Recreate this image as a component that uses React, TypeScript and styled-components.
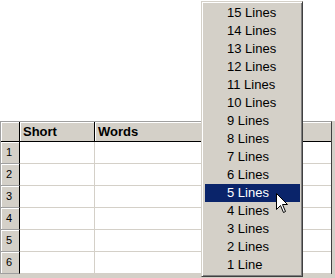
import React from "react";
import styled, { createGlobalStyle } from "styled-components";

const GlobalStyle = createGlobalStyle`
  html, body { margin: 0; padding: 0; background: #ffffff; }
  body { font-family: "Liberation Sans", Arial, sans-serif; }
`;

const Stage = styled.div`
  position: relative;
  width: 335px;
  height: 278px;
  overflow: hidden;
  background: #ffffff;
  padding-top: 121px;
  box-sizing: border-box;
`;

const Panel = styled.div`
  background: #d4d0c8;
  padding: 0 3px 4px 0;
  height: 157px;
  box-sizing: border-box;
`;

const Frame = styled.div`
  display: grid;
  grid-template-columns: 19px 75px 1fr;
  grid-template-rows: 20px repeat(6, 22px);
  width: 332px;
  border-top: 1px solid #a0a0a0;
  border-left: 1px solid #a0a0a0;
  border-right: 1px solid #404040;
  box-sizing: border-box;
  background: #ffffff;
`;

const HeadCell = styled.div<{ $last?: boolean }>`
  background: #d4d0c8;
  box-shadow: inset 1px 1px #ffffff;
  border-bottom: 1px solid #000000;
  border-right: ${(p) => (p.$last ? "none" : "1px solid #000000")};
  font-weight: bold;
  font-size: 13px;
  line-height: 19px;
  padding-left: 3px;
  color: #000000;
  white-space: nowrap;
  overflow: hidden;
`;

const RowHead = styled.div`
  background: #d4d0c8;
  box-shadow: inset 1px 1px #ffffff;
  border-right: 1px solid #000000;
  border-bottom: 1px solid #a0a0a0;
  font-size: 11px;
  line-height: 21px;
  padding-left: 5px;
  color: #000000;
`;

const Cell = styled.div<{ $last?: boolean }>`
  background: #ffffff;
  border-bottom: 1px solid #d4d0c8;
  border-right: ${(p) => (p.$last ? "none" : "1px solid #d4d0c8")};
`;

const Menu = styled.div`
  position: absolute;
  left: 201px;
  top: 1px;
  width: 102px;
  background: #d4d0c8;
  border: 1px solid;
  border-color: #d4d0c8 #404040 #404040 #d4d0c8;
  box-shadow: inset 1px 1px #ffffff, inset -1px -1px #808080;
  padding: 2px 2px 2px 3px;
  box-sizing: border-box;
  display: flex;
  flex-direction: column;
`;

const Item = styled.div<{ $active?: boolean }>`
  height: 18px;
  line-height: 18px;
  font-size: 13px;
  padding-left: 22px;
  background: ${(p) => (p.$active ? "#0a246a" : "transparent")};
  color: ${(p) => (p.$active ? "#ffffff" : "#000000")};
  white-space: nowrap;
`;

const Cursor = styled.svg`
  position: absolute;
  left: 276px;
  top: 193px;
`;

const items = [15, 14, 13, 12, 11, 10, 9, 8, 7, 6, 5, 4, 3, 2, 1];

export default function App() {
  return (
    <>
      <GlobalStyle />
      <Stage>
        <Panel>
          <Frame>
            <HeadCell />
            <HeadCell>Short</HeadCell>
            <HeadCell $last>Words</HeadCell>
            {[1, 2, 3, 4, 5, 6].map((n) => (
              <React.Fragment key={n}>
                <RowHead>{n}</RowHead>
                <Cell />
                <Cell $last />
              </React.Fragment>
            ))}
          </Frame>
        </Panel>
        <Menu>
          {items.map((n) => (
            <Item key={n} $active={n === 5}>
              {n === 1 ? "1 Line" : `${n} Lines`}
            </Item>
          ))}
        </Menu>
        <Cursor width="13" height="21" viewBox="0 0 13 21">
          <path
            d="M0.5 0.5 L0.5 16.5 L4.5 12.5 L7.5 19.5 L9.5 18.5 L6.5 11.5 L11.5 11.5 Z"
            fill="#ffffff"
            stroke="#000000"
            strokeWidth="1"
          />
        </Cursor>
      </Stage>
    </>
  );
}
